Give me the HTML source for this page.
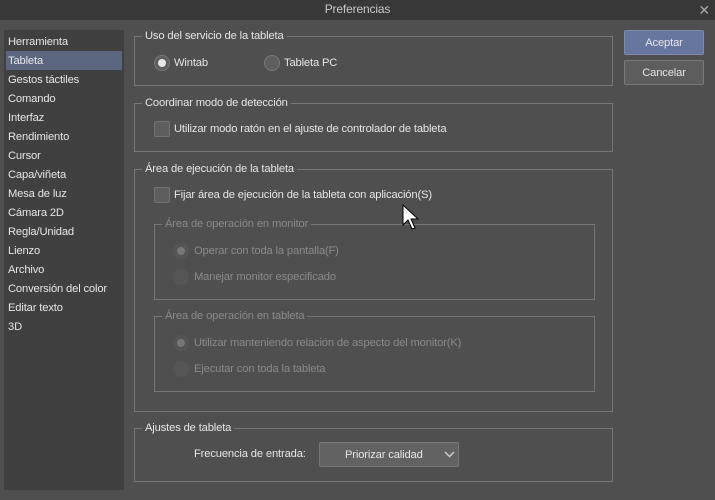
<!DOCTYPE html>
<html><head><meta charset="utf-8"><style>
*{margin:0;padding:0;box-sizing:border-box}
body{width:715px;height:500px;background:#4f4f4f;font-family:"Liberation Sans",sans-serif;font-size:11.2px;color:#e6e6e6;position:relative;overflow:hidden;letter-spacing:-0.15px}
.title{position:absolute;left:0;top:0;width:715px;height:20px;background:#383838;text-align:center;line-height:19px;color:#c8c8c8;font-size:12px}
.x{position:absolute;right:5px;top:1px;color:#aaa;font-size:14px}
.side{position:absolute;left:4px;top:30px;width:120px;height:460px;background:#404040}
.side div{height:19px;line-height:20px;padding-left:4px}
.side .sel{background:#5b6680;margin:0 2px 0 2px;padding-left:2px}
.gb{position:absolute;border:1px solid #777}
.gl{position:absolute;top:-8px;left:8px;background:#4f4f4f;padding:0 3px;line-height:14px}
.t{position:absolute;white-space:nowrap;line-height:17px}
.cb{position:absolute;width:16px;height:16px;background:#5e5e5e;border:1px solid #737373;border-radius:2px}
.rb{position:absolute;width:16px;height:16px;border-radius:50%;background:#5e5e5e;border:1px solid #787878}
.rb.on::after{content:"";position:absolute;left:3px;top:3px;width:8px;height:8px;border-radius:50%;background:#e8e8e8}
.dis{color:#8a8a8a}
.rbd{position:absolute;width:16px;height:16px;border-radius:50%;background:#555}
.rbd.on::after{content:"";position:absolute;left:4px;top:4px;width:8px;height:8px;border-radius:50%;background:#777}
.btn{position:absolute;left:624px;width:80px;height:25px;border:1px solid #7a7a7a;border-radius:2px;text-align:center;line-height:24px}
</style></head><body>
<div class="title">Preferencias<span class="x">✕</span></div>
<div class="side">
<div style="margin-top:2px">Herramienta</div><div class="sel">Tableta</div><div>Gestos táctiles</div><div>Comando</div><div>Interfaz</div><div>Rendimiento</div><div>Cursor</div><div>Capa/viñeta</div><div>Mesa de luz</div><div>Cámara 2D</div><div>Regla/Unidad</div><div>Lienzo</div><div>Archivo</div><div>Conversión del color</div><div>Editar texto</div><div>3D</div>
</div>

<div class="gb" style="left:134px;top:36px;width:479px;height:50px"><span class="gl" style="left:7px">Uso del servicio de la tableta</span></div>
<div class="rb on" style="left:154px;top:55px"></div><span class="t" style="left:174px;top:55px">Wintab</span>
<div class="rb" style="left:264px;top:55px"></div><span class="t" style="left:284px;top:55px">Tableta PC</span>

<div class="gb" style="left:134px;top:103px;width:479px;height:49px"><span class="gl" style="left:7px">Coordinar modo de detección</span></div>
<div class="cb" style="left:154px;top:121px"></div><span class="t" style="left:174px;top:121px">Utilizar modo ratón en el ajuste de controlador de tableta</span>

<div class="gb" style="left:134px;top:169px;width:479px;height:243px"><span class="gl" style="left:7px">Área de ejecución de la tableta</span></div>
<div class="cb" style="left:154px;top:187px"></div><span class="t" style="left:174px;top:187px">Fijar área de ejecución de la tableta con aplicación(S)</span>

<div class="gb" style="left:154px;top:224px;width:441px;height:76px"><span class="gl dis" style="left:7px">Área de operación en monitor</span></div>
<div class="rbd on" style="left:173px;top:243px"></div><span class="t dis" style="left:194px;top:243px">Operar con toda la pantalla(F)</span>
<div class="rbd" style="left:173px;top:269px"></div><span class="t dis" style="left:194px;top:269px">Manejar monitor especificado</span>

<div class="gb" style="left:154px;top:316px;width:441px;height:76px"><span class="gl dis" style="left:7px">Área de operación en tableta</span></div>
<div class="rbd on" style="left:173px;top:335px"></div><span class="t dis" style="left:194px;top:335px">Utilizar manteniendo relación de aspecto del monitor(K)</span>
<div class="rbd" style="left:173px;top:361px"></div><span class="t dis" style="left:194px;top:361px">Ejecutar con toda la tableta</span>

<div class="gb" style="left:134px;top:428px;width:479px;height:54px"><span class="gl" style="left:7px">Ajustes de tableta</span></div>
<span class="t" style="left:194px;top:446px">Frecuencia de entrada:</span>
<div style="position:absolute;left:319px;top:442px;width:140px;height:25px;background:#626262;border:1px solid #777;border-radius:2px;line-height:24px;padding-left:25px">Priorizar calidad</div>
<svg style="position:absolute;left:444px;top:451px" width="11" height="7"><path d="M1 1 L5.5 5.5 L10 1" stroke="#ccc" stroke-width="1.5" fill="none"/></svg>

<div class="btn" style="top:30px;background:#66769e;border-color:#7d8bb0">Aceptar</div>
<div class="btn" style="top:60px;background:#5d5d5d">Cancelar</div>

<svg style="position:absolute;left:402px;top:204px" width="20" height="30"><path d="M1 1 L1 21 L6 16 L10 25 L13 24 L9 15 L16 15 Z" fill="#fff" stroke="#000" stroke-width="1"/></svg>
</body></html>
